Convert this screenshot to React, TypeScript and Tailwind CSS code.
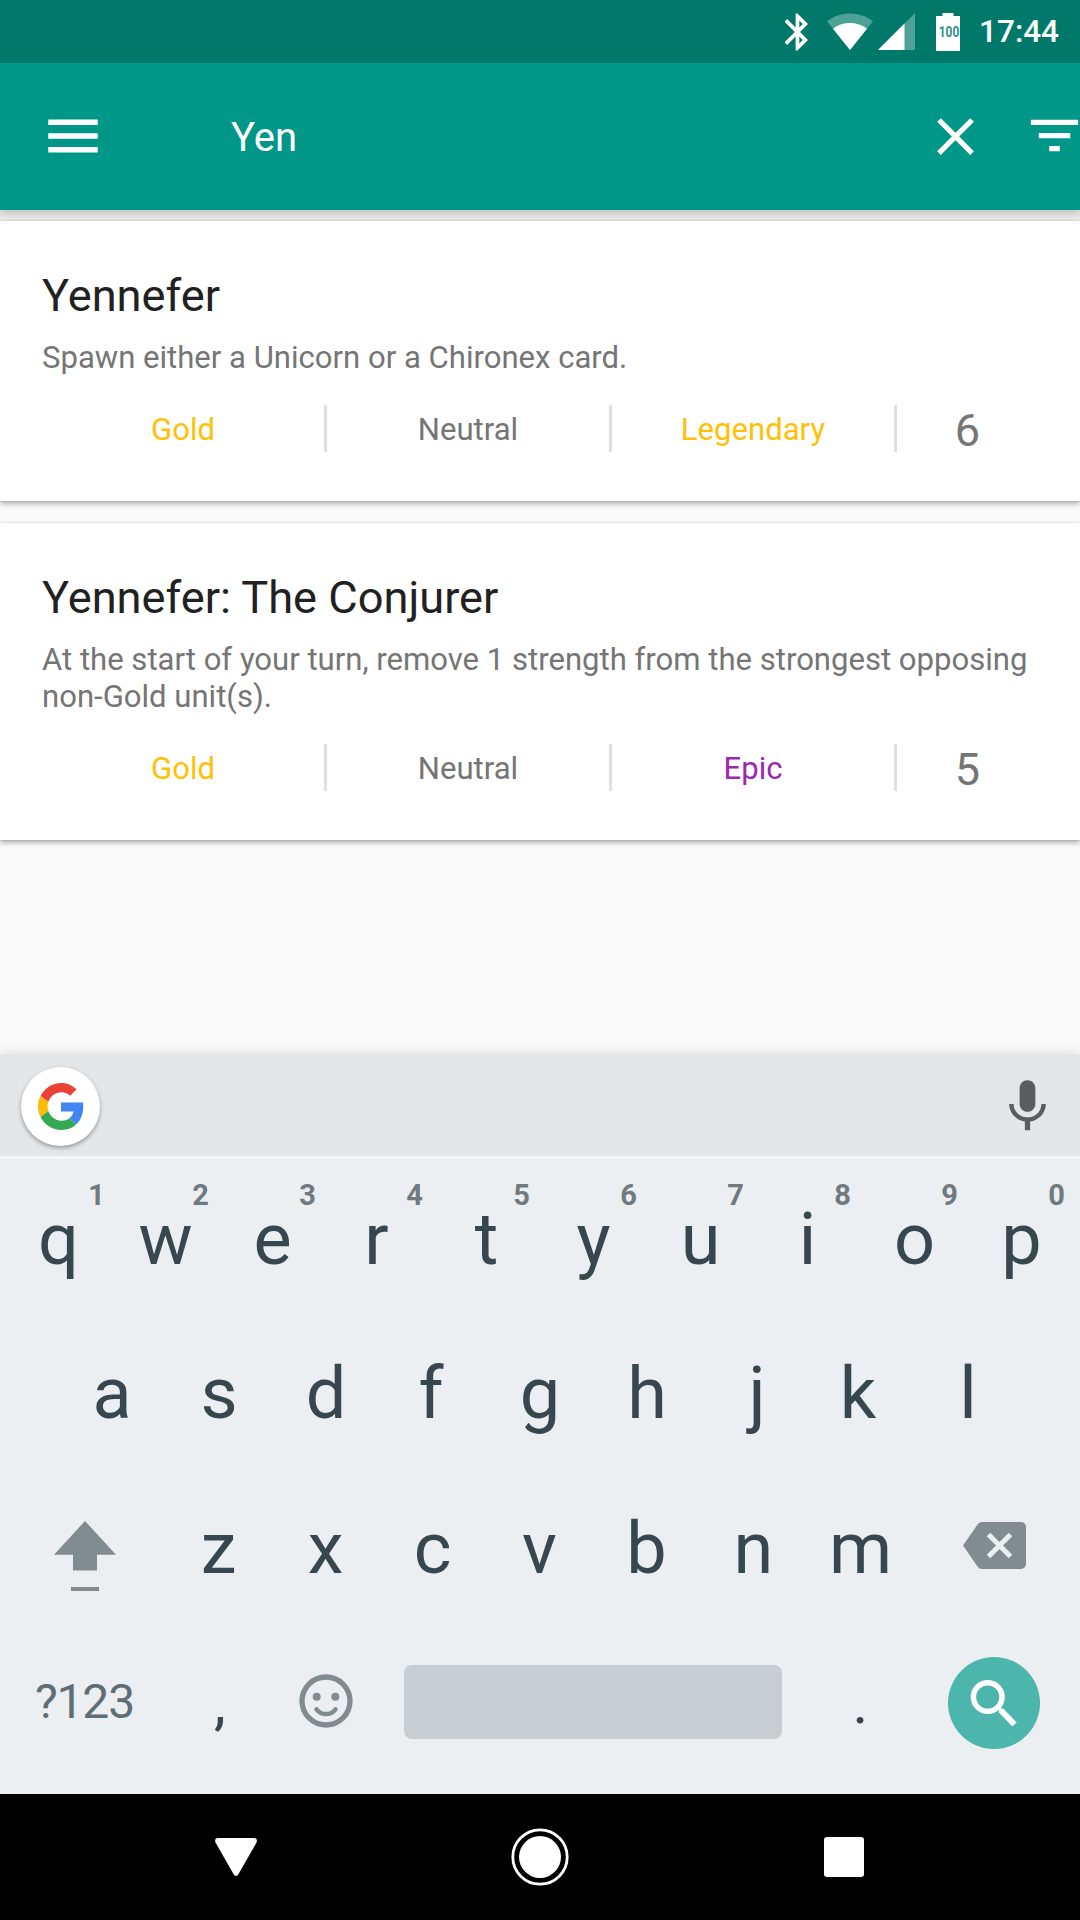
import React from "react";

type CardData = {
  name: string;
  text: string;
  kind: string;
  faction: string;
  rarity: string;
  rarityColor: string;
  strength: number;
};

const cards: CardData[] = [
  {
    name: "Yennefer",
    text: "Spawn either a Unicorn or a Chironex card.",
    kind: "Gold",
    faction: "Neutral",
    rarity: "Legendary",
    rarityColor: "text-[#ffc107]",
    strength: 6,
  },
  {
    name: "Yennefer: The Conjurer",
    text: "At the start of your turn, remove 1 strength from the strongest opposing non-Gold unit(s).",
    kind: "Gold",
    faction: "Neutral",
    rarity: "Epic",
    rarityColor: "text-[#9c27b0]",
    strength: 5,
  },
];

function StatusBar() {
  return (
    <div className="flex h-[63px] items-center justify-end bg-[#00796b] pr-[21px] text-white">
      <svg className="mr-[18px] h-[38px] w-[24px]" viewBox="5.4 1.7 12.7 20.6" fill="currentColor">
        <path d="M17.71 7.71L12 2h-1v7.59L6.41 5 5 6.41 10.59 12 5 17.59 6.41 19 11 14.41V22h1l5.71-5.71-4.3-4.29 4.3-4.29zM13 5.83l1.88 1.88L13 9.59V5.83zm1.88 10.46L13 18.17v-3.76l1.88 1.88z" />
      </svg>
      <svg className="mr-[5px] h-[37px] w-[46px]" viewBox="0 0 46 37" fill="currentColor">
        <path opacity=".3" d="M0 8.3C6.500 3.100 14.500.4 23 .4s16.500 2.700 23 7.900L23 37z" />
        <path d="M6 15.800c4.800-3.800 10.700-5.800 17-5.800s12.200 2 17 5.800L23 37z" />
      </svg>
      <svg className="mr-[21px] h-[37px] w-[37px]" viewBox="0 0 37 37" fill="currentColor">
        <path opacity=".3" d="M37 0v37H0z" />
        <path d="M26.500 10.500V37H0z" />
      </svg>
      <div className="relative mr-[19px] h-[38px] w-[24px]">
        <svg className="h-[38px] w-[24px]" viewBox="0 0 24 38" fill="currentColor">
          <path d="M6.500 0h11v3H24v35H0V3h6.500z" />
        </svg>
        <span className="absolute top-[12px] left-[-7px] w-[40px] scale-x-[0.82] text-center text-[14.500px] leading-[15px] font-bold text-[#2c9184]">
          100
        </span>
      </div>
      <span className="text-[31.500px] leading-[37px] font-medium">17:44</span>
    </div>
  );
}

function Toolbar() {
  return (
    <div className="relative z-10 flex h-[147px] items-center bg-[#009688] pl-[40px] text-white shadow-[0_4px_8px_rgba(0,0,0,0.18)]">
      <svg className="mb-[2px] h-[66px] w-[66px] shrink-0" viewBox="0 0 24 24" fill="currentColor">
        <path d="M3 18h18v-2H3v2zm0-5h18v-2H3v2zm0-7v2h18V6H3z" />
      </svg>
      <span className="ml-[125px] flex-1 pt-[2px] text-[40px] leading-[47px]">Yen</span>
      <svg className="h-[63px] w-[63px] shrink-0" viewBox="0 0 24 24" fill="currentColor">
        <path d="M19 6.410L17.590 5 12 10.590 6.410 5 5 6.410 10.590 12 5 17.590 6.410 19 12 13.410 17.590 19 19 17.590 13.410 12z" />
      </svg>
      <div className="ml-[36px] w-[57px] shrink-0 overflow-hidden">
        <svg className="mb-[2px] h-[63px] w-[63px]" viewBox="0 0 24 24" fill="currentColor">
          <path d="M10 18h4v-2h-4v2zM3 6v2h18V6H3zm3 7h12v-2H6v2z" />
        </svg>
      </div>
    </div>
  );
}

function Divider() {
  return <div className="h-[47px] w-[3px] bg-[#e0e0e0]" />;
}

function GameCard({ card }: { card: CardData }) {
  return (
    <div className="bg-white px-[42px] pt-[48px] pb-[49px] shadow-[0_3px_5px_rgba(0,0,0,0.28),0_0_2px_rgba(0,0,0,0.2)]">
      <h2 className="text-[45.200px] leading-[53px] text-[#212121]">{card.name}</h2>
      <p className="mt-[17px] mb-[29px] text-[31.080px] leading-[37px] text-[#757575]">{card.text}</p>
      <div className="grid grid-cols-[2fr_3px_2fr_3px_2fr_3px_1fr] items-center text-center text-[31.080px] leading-[37px] text-[#757575]">
        <span className="pt-[2px] text-[#ffc107]">{card.kind}</span>
        <Divider />
        <span className="pt-[2px]">{card.faction}</span>
        <Divider />
        <span className={`pt-[2px] ${card.rarityColor}`}>{card.rarity}</span>
        <Divider />
        <span className="pt-[4px] text-[45px] leading-[43px]">{card.strength}</span>
      </div>
    </div>
  );
}

function GoogleLogo() {
  return (
    <svg className="ml-[2px] h-[47px] w-[47px]" viewBox="0 0 48 48">
      <path fill="#EA4335" d="M24 0C14.600 0 6.500 5.400 2.600 13.200L10.530 19.400C12.400 13.700 17.700 9.500 24 9.500c3.540 0 6.500 1.220 8.900 3.500l6.500-6.500C35.200 2.500 30 0 24 0z" />
      <path fill="#4285F4" d="M46 20H23.500v9.100h12.800c-.5 2.900-2.200 5.400-4.600 7.100l7.400 6C43.600 38 46.200 31.800 46.200 24.500c0-1.600 0-3-.2-4.500z" />
      <path fill="#FBBC05" d="M10.530 28.590c-.48-1.450-.76-2.990-.76-4.590s.27-3.140.76-4.590l-7.980-6.190C.92 16.460 0 20.120 0 24c0 3.880.92 7.540 2.560 10.780l7.970-6.190z" />
      <path fill="#34A853" d="M24 48c6.480 0 11.200-2.130 15.100-5.810l-7.400-6c-2.150 1.450-4.500 2.300-7.700 2.300-6.260 0-11.570-4.220-13.470-9.910l-7.980 6.190C6.510 42.620 14.620 48 24 48z" />
    </svg>
  );
}

const nudges: Record<string, string> = {
  r: "right-[3px]",
  f: "right-[2px]",
  j: "left-[3px]",
  k: "right-[3px]",
};

function Key({ label, hint }: { label: string; hint?: string }) {
  return (
    <div className="relative w-[107px] text-center text-[72px] leading-[155px] text-[#37474f]">
      <span className={`relative ${nudges[label] ?? ""}`}>{label}</span>
      {hint && (
        <span
          className={`absolute top-[16px] text-[29px] leading-[34px] font-bold text-[#6e7a80] ${
            hint === "1" ? "right-[7px]" : "right-[10px]"
          }`}
        >
          {hint}
        </span>
      )}
    </div>
  );
}

function Keyboard() {
  return (
    <div className="relative bg-[#eceff1] shadow-[0_-2px_10px_rgba(0,0,0,0.1)]">
      <div className="flex h-[105px] items-center justify-between border-b-[3px] border-[#f5f7f9] bg-[#e3e7e9] pr-[21px] pl-[21px]">
        <div className="mt-[3px] flex h-[79px] w-[79px] items-center justify-center rounded-full bg-white shadow-[0_2px_4px_rgba(0,0,0,0.35)]">
          <GoogleLogo />
        </div>
        <svg className="mt-[2px] h-[63px] w-[63px] text-[#5b5c5e]" viewBox="0 0 24 24" fill="currentColor">
          <path d="M12 14c1.660 0 2.990-1.340 2.990-3L15 5c0-1.660-1.340-3-3-3S9 3.340 9 5v6c0 1.660 1.340 3 3 3zm5.300-3c0 3-2.540 5.100-5.300 5.100S6.700 14 6.700 11H5c0 3.410 2.720 6.230 6 6.720V21h2v-3.280c3.280-.48 6-3.300 6-6.720h-1.700z" />
        </svg>
      </div>
      <div className="h-[635px] pt-[3px]">
        <div className="flex h-[154px] justify-center">
          {"qwertyuiop".split("").map((k, i) => (
            <Key key={k} label={k} hint={String((i + 1) % 10)} />
          ))}
        </div>
        <div className="flex h-[155px] justify-center">
          {"asdfghjkl".split("").map((k) => (
            <Key key={k} label={k} />
          ))}
        </div>
        <div className="flex h-[155px] pl-1 text-[#808c90]">
          <div className="flex w-[161px] justify-center pt-[50px]">
            <svg className="h-[70px] w-[62px]" viewBox="0 0 62 70" fill="currentColor">
              <path d="M31 0l31 33.700H43v15.800H19V33.700H0zM17 66h28v4H17z" />
            </svg>
          </div>
          {"zxcvbnm".split("").map((k) => (
            <Key key={k} label={k} />
          ))}
          <div className="flex w-[161px] justify-center pt-[51px]">
            <svg className="h-[47px] w-[63px]" viewBox="0 0 63 47">
              <path
                fill="currentColor"
                d="M19 0H58a5 5 0 0 1 5 5V42a5 5 0 0 1-5 5H19q-3 0-4.500-2.500L0 23.500 14.500 2.500Q16 0 19 0z"
              />
              <path stroke="#eceff1" strokeWidth="5" d="M25.500 12.500l22 22m0-22l-22 22" />
            </svg>
          </div>
        </div>
        <div className="flex h-[155px] pl-1">
          <div className="w-[161px] pt-[1px] text-center text-[48px] leading-[150px] tracking-[-1.100px] text-[#5f6e74]">
            ?123
          </div>
          <div className="w-[107px] pt-[5px] pl-[3px] text-center text-[60px] leading-[143px] text-[#37474f]">,</div>
          <div className="flex w-[107px] justify-center pt-[48px] text-[#808c90]">
            <svg className="h-[54px] w-[54px]" viewBox="0 0 54 54" fill="none" stroke="currentColor">
              <circle cx="27" cy="27" r="24" strokeWidth="5.300" />
              <circle cx="17.700" cy="22.800" r="4" fill="currentColor" stroke="none" />
              <circle cx="36.300" cy="22.800" r="4" fill="currentColor" stroke="none" />
              <path d="M17.500 35.300c5 6.400 14 6.400 19 0" strokeWidth="4.500" strokeLinecap="round" />
            </svg>
          </div>
          <div className="flex w-[428px] justify-center pt-[39px]">
            <div className="h-[74px] w-[378px] rounded-lg bg-[#c8cdd1]" />
          </div>
          <div className="w-[107px] pt-[5px] text-center text-[60px] leading-[143px] text-[#37474f]">.</div>
          <div className="flex w-[160px] justify-center pt-[31px]">
            <div className="h-[92px] w-[92px] rounded-full bg-[#4db6ac]">
              <svg className="h-[92px] w-[92px]" viewBox="0 0 92 92" fill="none" stroke="white">
                <circle cx="39.700" cy="40" r="14.300" strokeWidth="5.500" />
                <path d="M49.500 49.800l3.500 3.700" strokeWidth="3" />
                <path d="M52.500 53l14 14.500" strokeWidth="6" />
              </svg>
            </div>
          </div>
        </div>
      </div>
    </div>
  );
}

function NavBar() {
  return (
    <div className="grid h-[126px] grid-cols-[304px_304px_304px] place-items-center justify-center bg-black text-white">
      <svg className="h-[38px] w-[42px]" viewBox="0 0 42 38" fill="currentColor">
        <path d="M3 0H39Q43 .500 41.500 4.500L23.500 36Q21 40 18.500 36L.500 4.500Q-1 .500 3 0z" />
      </svg>
      <svg className="h-[58px] w-[58px]" viewBox="0 0 58 58">
        <circle cx="29" cy="29" r="27.200" fill="none" stroke="white" strokeWidth="2.800" />
        <circle cx="29" cy="29" r="21" fill="white" />
      </svg>
      <div className="h-[40px] w-[40px] rounded-[3px] bg-white" />
    </div>
  );
}

export default function App() {
  return (
    <div className="flex h-[1920px] w-[1080px] flex-col overflow-hidden bg-[#fafafa] font-['Roboto',sans-serif]">
      <StatusBar />
      <Toolbar />
      <div className="flex flex-1 flex-col">
        <div className="h-[11px] bg-[#ececec]" />
        <div className="flex flex-col gap-[22px]">
          {cards.map((card) => (
            <GameCard key={card.name} card={card} />
          ))}
        </div>
      </div>
      <Keyboard />
      <NavBar />
    </div>
  );
}
